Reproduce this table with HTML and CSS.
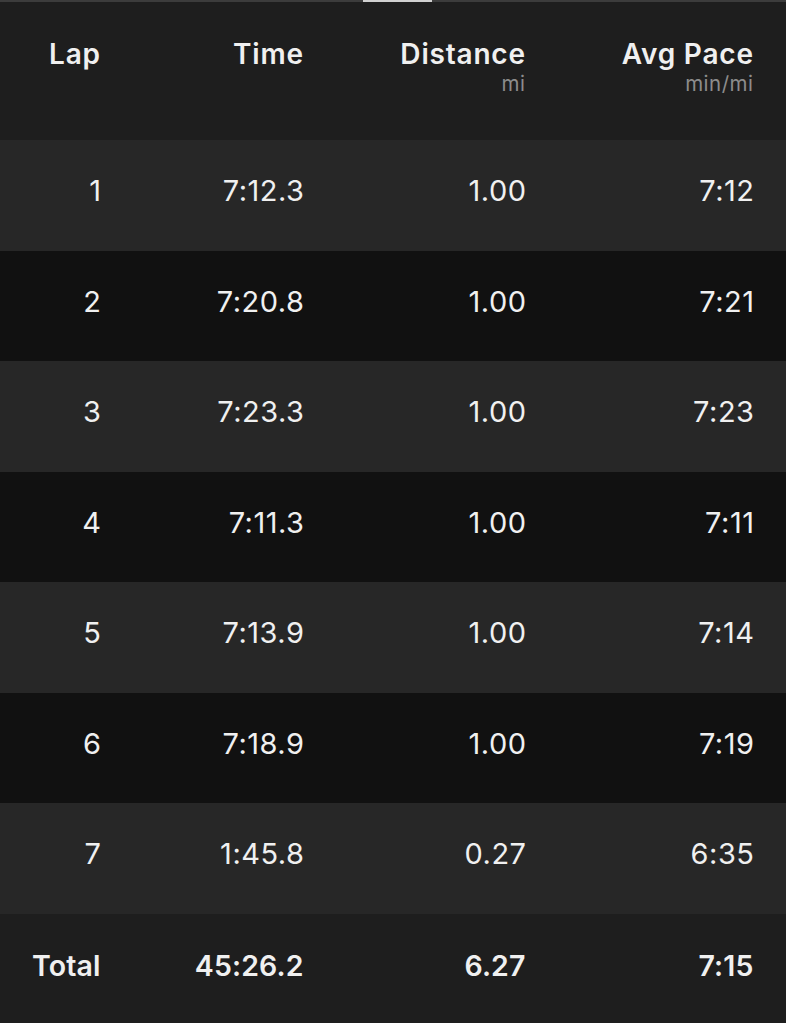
FILE: index.html
```html
<!DOCTYPE html>
<html>
<head>
<meta charset="utf-8">
<link rel="stylesheet" href="styles.css">
</head>
<body>
<div class="topbar"><div class="indicator"></div></div>
<div class="table">
  <div class="row head">
    <div class="c c1"><span class="t">Lap</span></div>
    <div class="c c2"><span class="t">Time</span></div>
    <div class="c c3"><span class="t">Distance</span><span class="u">mi</span></div>
    <div class="c c4"><span class="t">Avg Pace</span><span class="u">min/mi</span></div>
  </div>
  <div class="row odd"><div class="c c1">1</div><div class="c c2">7:12.3</div><div class="c c3">1.00</div><div class="c c4">7:12</div></div>
  <div class="row even"><div class="c c1">2</div><div class="c c2">7:20.8</div><div class="c c3">1.00</div><div class="c c4">7:21</div></div>
  <div class="row odd"><div class="c c1">3</div><div class="c c2">7:23.3</div><div class="c c3">1.00</div><div class="c c4">7:23</div></div>
  <div class="row even"><div class="c c1">4</div><div class="c c2">7:11.3</div><div class="c c3">1.00</div><div class="c c4">7:11</div></div>
  <div class="row odd"><div class="c c1">5</div><div class="c c2">7:13.9</div><div class="c c3">1.00</div><div class="c c4">7:14</div></div>
  <div class="row even"><div class="c c1">6</div><div class="c c2">7:18.9</div><div class="c c3">1.00</div><div class="c c4">7:19</div></div>
  <div class="row odd"><div class="c c1">7</div><div class="c c2">1:45.8</div><div class="c c3">0.27</div><div class="c c4">6:35</div></div>
  <div class="row total"><div class="c c1">Total</div><div class="c c2">45:26.2</div><div class="c c3">6.27</div><div class="c c4">7:15</div></div>
</div>
</body>
</html>
```
FILE: styles.css
```css
html, body {
  margin: 0;
  padding: 0;
  background: #1e1e1e;
}
body {
  width: 786px;
  height: 1023px;
  overflow: hidden;
  font-family: Inter, "Noto Sans", sans-serif;
  color: #f0f0f0;
}
.topbar {
  height: 2px;
  background: #3c3c3c;
  display: flex;
  justify-content: flex-start;
}
.indicator {
  margin-left: 363px;
  width: 69px;
  height: 2px;
  background: #d0d0d0;
}
.table {
  display: flex;
  flex-direction: column;
}
.row {
  display: flex;
  align-items: center;
  box-sizing: border-box;
  height: 110.5px;
  padding-bottom: 9px;
  font-size: 29px;
  font-weight: 400;
  letter-spacing: 0.5px;
}
.row.head {
  height: 138px;
  align-items: flex-start;
  padding-bottom: 0;
  background: #1e1e1e;
  letter-spacing: 0;
}
.row.odd { background: #272727; }
.row.even { background: #111111; }
.row.total {
  background: #1e1e1e;
  font-size: 28.5px;
  font-weight: 600;
  height: 109px;
  padding-bottom: 6px;
  letter-spacing: 0.1px;
}
.c {
  text-align: right;
  box-sizing: border-box;
}
.c1 { width: 101.5px; }
.c2 { width: 203px; }
.c3 { width: 222px; }
.c4 { width: 228px; }
.head .c1 { width: 100px; }
.total .c1 { width: 100.5px; }
.head .c {
  display: flex;
  flex-direction: column;
  align-items: flex-end;
  padding-top: 33px;
}
.head .t {
  font-size: 28px;
  font-weight: 600;
  line-height: 38px;
  letter-spacing: 0.8px;
  margin-right: -0.8px;
}
.head .u {
  font-size: 20.5px;
  color: #8c8c8c;
  line-height: 24px;
  margin-top: -1px;
  letter-spacing: 0.5px;
  margin-right: -0.5px;
}
```
